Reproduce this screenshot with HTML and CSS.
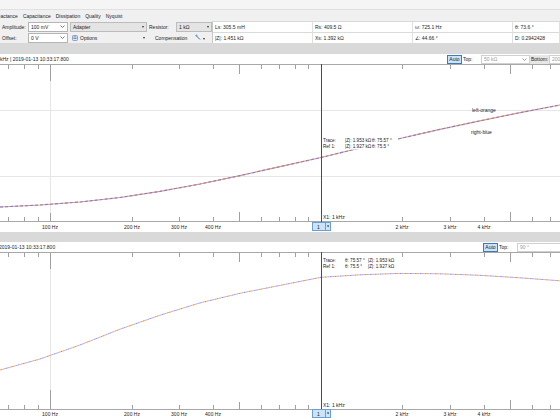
FILE: index.html
```html
<!DOCTYPE html>
<html>
<head>
<meta charset="utf-8">
<link rel="stylesheet" href="styles.css">
</head>
<body>
<div class="app">
  <div class="titlebar"></div>
  <div class="tabs">
    <span class="tab first">Reactance</span>
    <span class="tab">Capacitance</span>
    <span class="tab">Dissipation</span>
    <span class="tab">Quality</span>
    <span class="tab">Nyquist</span>
  </div>
  <div class="toolbar">
    <div class="controls">
      <span class="lbl">Amplitude:</span>
      <div class="select"><span>100 mV</span><svg class="chev" width="5" height="3" viewBox="0 0 5 3"><polyline points="0.5,0.5 2.5,2.5 4.5,0.5"/></svg></div>
      <div class="select combo"><span>Adapter</span><i class="tri"></i></div>
      <span class="lbl pad">Resistor:</span>
      <div class="select combo"><span>1 kΩ</span><i class="tri"></i></div>

      <span class="lbl">Offset:</span>
      <div class="select"><span>0 V</span><svg class="chev" width="5" height="3" viewBox="0 0 5 3"><polyline points="0.5,0.5 2.5,2.5 4.5,0.5"/></svg></div>
      <div class="flatbtn">
        <svg class="icon" width="6" height="6" viewBox="0 0 6 6"><rect x="0.5" y="0.5" width="5" height="5" rx="1" fill="#dfe8f2" stroke="#6f8fb3" stroke-width="0.8"/><path d="M1.5 2h3M1.5 3.5h3" stroke="#3a6ea5" stroke-width="0.7"/></svg>
        <span class="btntext">Options</span>
        <i class="tri"></i>
      </div>
      <div class="comp">
        <span>Compensation</span>
        <svg class="icon wand" width="7" height="7" viewBox="0 0 7 7"><path d="M1 1.5L5 5.5" stroke="#4a6c96" stroke-width="1"/><circle cx="1.5" cy="1.5" r="1" fill="#6aa0dc"/></svg>
        <i class="tri"></i>
      </div>
    </div>
    <div class="readouts">
      <div class="cell">Ls: 305.5 mH</div>
      <div class="cell">Rs: 409.5 Ω</div>
      <div class="cell">ω: 725.1 Hz</div>
      <div class="cell">θ: 73.6 °</div>
      <div class="cell">|Z|: 1.451 kΩ</div>
      <div class="cell">Xs: 1.392 kΩ</div>
      <div class="cell">∠: 44.66 °</div>
      <div class="cell">D: 0.2942428</div>
    </div>
  </div>

  <div class="band"></div>

  <div class="header header-upper">
    <span class="stamp">kHz | 2019-01-13 10:33:17.800</span>
    <div class="range">
      <span class="auto">Auto</span>
      <span class="rlbl">Top:</span>
      <span class="rinput w49">50 kΩ<svg class="chev" width="5" height="3" viewBox="0 0 5 3"><polyline points="0.5,0.5 2.5,2.5 4.5,0.5"/></svg></span>
      <span class="rlbl dark">Bottom:</span>
      <span class="rinput w49">200</span>
    </div>
  </div>

  <svg class="chart" width="560" height="168" viewBox="0 0 560 168">
    <g class="grid">
      <line x1="0" y1="46.5" x2="560" y2="46.5"/>
      <line x1="0" y1="112.5" x2="560" y2="112.5"/>
      <line x1="50.5" y1="0" x2="50.5" y2="158"/>
    </g>
    <line class="axis" x1="0" y1="0.5" x2="560" y2="0.5"/>
    <path class="ticks" d="M8.5 1v4M24.5 1v4M38.5 1v4M50.5 1v16M132.5 1v4M179.5 1v4M213.5 1v4M239.5 1v9M261.5 1v4M279.5 1v4M295.5 1v4M308.5 1v4M402.5 1v4M450.5 1v4M484.5 1v4M510.5 1v9M532.5 1v4M550.5 1v4"/>
    <line class="axis" x1="0" y1="157.5" x2="560" y2="157.5"/>
    <path class="ticks" d="M8.5 157v-4M24.5 157v-4M38.5 157v-4M50.5 157v-8M132.5 157v-4M179.5 157v-4M213.5 157v-4M239.5 157v-9M261.5 157v-4M279.5 157v-4M295.5 157v-4M308.5 157v-4M402.5 157v-4M450.5 157v-4M484.5 157v-4M510.5 157v-9M532.5 157v-4M550.5 157v-4"/>
    <g class="xlabels">
      <text x="50" y="165">100 Hz</text>
      <text x="132" y="165">200 Hz</text>
      <text x="179" y="165">300 Hz</text>
      <text x="213" y="165">400 Hz</text>
      <text x="402" y="165">2 kHz</text>
      <text x="450" y="165">3 kHz</text>
      <text x="484" y="165">4 kHz</text>
    </g>
    <polyline class="trace-orange" points="0,143 40,141 80,138 120,133.5 160,127.4 200,120 240,111.6 280,102.6 321,93.5 360,84 400,74.5 440,65.3 480,56.8 520,48.7 560,41"/>
    <polyline class="trace-blue" points="0,143 40,141 80,138 120,133.5 160,127.4 200,120 240,111.6 280,102.6 321,93.5 360,84 400,74.5 440,65.3 480,56.8 520,48.7 560,41"/>
    <text class="lbltext" x="472" y="48">left-orange</text>
    <text class="lbltext" x="471" y="70">right-blue</text>
    <rect class="cursor" x="321" y="0" width="1" height="158"/>
    <rect class="annbg" x="322" y="72.5" width="76" height="13"/>
    <g class="annot">
      <text x="323" y="78">Trace:</text>
      <text x="345" y="78">|Z|: 1.953 kΩ</text>
      <text x="372" y="78">θ: 75.57 °</text>
      <text x="323" y="84">Ref 1:</text>
      <text x="345" y="84">|Z|: 1.927 kΩ</text>
      <text x="372" y="84">θ: 75.5 °</text>
    </g>
    <rect class="x1bg" x="322" y="149" width="24" height="8"/>
    <text class="annot-t" x="323" y="155">X1: 1 kHz</text>
    <rect class="cbox" x="312.5" y="158.5" width="18" height="8"/>
    <line class="csep" x1="325.5" y1="159" x2="325.5" y2="166"/>
    <text class="annot-t" x="317" y="165">1</text>
    <path class="ctri" d="M326.8 161.6h2.6l-1.3 1.6z"/>
  </svg>

  <div class="band band2"></div>

  <div class="header header-lower">
    <span class="stamp shift">2019-01-13 10:33:17.800</span>
    <div class="range">
      <span class="auto">Auto</span>
      <span class="rlbl">Top:</span>
      <span class="rinput w49">90 °</span>
    </div>
  </div>

  <svg class="chart" width="560" height="168" viewBox="0 0 560 168">
    <g class="grid">
      <line x1="50.5" y1="0" x2="50.5" y2="158"/>
    </g>
    <line class="axis" x1="0" y1="0.5" x2="560" y2="0.5"/>
    <path class="ticks" d="M8.5 1v4M24.5 1v4M38.5 1v4M50.5 1v16M132.5 1v4M179.5 1v4M213.5 1v4M239.5 1v9M261.5 1v4M279.5 1v4M295.5 1v4M308.5 1v4M402.5 1v4M450.5 1v4M484.5 1v4M510.5 1v9M532.5 1v4M550.5 1v4"/>
    <line class="axis" x1="0" y1="157.5" x2="560" y2="157.5"/>
    <path class="ticks" d="M8.5 157v-4M24.5 157v-4M38.5 157v-4M50.5 157v-19M132.5 157v-4M179.5 157v-4M213.5 157v-4M239.5 157v-7M261.5 157v-4M279.5 157v-4M295.5 157v-4M308.5 157v-4M402.5 157v-4M450.5 157v-4M484.5 157v-4M510.5 157v-9M532.5 157v-4M550.5 157v-4"/>
    <g class="xlabels">
      <text x="50" y="164">100 Hz</text>
      <text x="132" y="164">200 Hz</text>
      <text x="179" y="164">300 Hz</text>
      <text x="213" y="164">400 Hz</text>
      <text x="402" y="164">2 kHz</text>
      <text x="450" y="164">3 kHz</text>
      <text x="484" y="164">4 kHz</text>
    </g>
    <polyline class="trace-orange dotted" points="0,118 40,107 80,93 120,77.2 160,63.2 200,50.9 240,41.3 280,33.4 321,25.3 360,22.8 400,21.4 440,21.8 480,23.3 520,25.8 560,28.8"/>
    <polyline class="trace-blue dotted2" points="0,118 40,107 80,93 120,77.2 160,63.2 200,50.9 240,41.3 280,33.4 321,25.3 360,22.8 400,21.4 440,21.8 480,23.3 520,25.8 560,28.8"/>
    <rect class="cursor" x="321" y="0" width="1" height="157"/>
    <rect class="annbg" x="322" y="5" width="78" height="13"/>
    <g class="annot">
      <text x="323" y="10">Trace:</text>
      <text x="345" y="10">θ: 75.57 °</text>
      <text x="368" y="10">|Z|: 1.953 kΩ</text>
      <text x="323" y="16">Ref 1:</text>
      <text x="345" y="16">θ: 75.5 °</text>
      <text x="368" y="16">|Z|: 1.927 kΩ</text>
    </g>
    <rect class="x1bg" x="322" y="149" width="24" height="8"/>
    <text class="annot-t" x="323" y="155">X1: 1 kHz</text>
    <rect class="cbox" x="312.5" y="157.5" width="18" height="8"/>
    <line class="csep" x1="325.5" y1="158" x2="325.5" y2="165"/>
    <text class="annot-t" x="317" y="164">1</text>
    <path class="ctri" d="M326.8 160.6h2.6l-1.3 1.6z"/>
  </svg>
</div>
</body>
</html>
```

FILE: styles.css
```css
* { box-sizing: border-box; }
html, body { margin: 0; padding: 0; }
body {
  width: 560px;
  height: 420px;
  overflow: hidden;
  background: #f0f0f0;
  font-family: "Liberation Sans", Arial, sans-serif;
  font-size: 5px;
  color: #1e1e1e;
}
.app { width: 560px; height: 420px; display: flex; flex-direction: column; overflow: hidden; }

.titlebar { height: 10px; flex: none; background: #f5f5f5; border-bottom: 1px solid #e0e0e0; }

.tabs { height: 11px; flex: none; display: flex; align-items: center; gap: 5px; white-space: nowrap; background: #f0f0f0; }
.tab.first { margin-left: -6px; }

.toolbar { height: 22px; flex: none; display: flex; background: #f0f0f0; }
.controls {
  width: 212px;
  flex: none;
  display: grid;
  grid-template-columns: 28px 42px 77px 29px 36px;
  grid-template-rows: 11px 11px;
  align-items: center;
}
.lbl { padding-left: 2px; white-space: nowrap; }
.lbl.pad { padding-left: 2px; }
.select {
  height: 10px;
  width: 40px;
  border: 1px solid #b4b4b4;
  background: #fff;
  display: flex;
  align-items: center;
  justify-content: space-between;
  padding: 0 2px 0 2px;
  white-space: nowrap;
}
.select.combo { width: 100%; background: #e4e4e4; border-color: #bcbcbc; }
.chev { fill: none; stroke: #555; stroke-width: 0.8; }
.tri {
  display: block;
  width: 0; height: 0;
  border-left: 1.5px solid transparent;
  border-right: 1.5px solid transparent;
  border-top: 2px solid #333;
}
.flatbtn { height: 10px; display: flex; align-items: center; padding: 0 2px; gap: 2px; }
.flatbtn .tri { margin-left: auto; }
.btntext { padding-left: 0; }
.comp { grid-column: span 2; display: flex; align-items: center; padding-left: 8px; gap: 0; white-space: nowrap; }
.comp .wand { margin-left: 8px; }
.comp .tri { margin-left: 0.5px; margin-top: 2px; }

.readouts {
  flex: 1;
  display: grid;
  grid-template-columns: 100px 100px 100px 1fr;
  grid-template-rows: 11px 11px;
  background: #fff;
  border-left: 1px solid #c8c8c8;
  border-top: 1px solid #d8d8d8;
}
.cell {
  padding-left: 2px;
  display: flex;
  align-items: center;
  border-right: 1px solid #e0e0e0;
  border-bottom: 1px solid #dadada;
  white-space: nowrap;
}

.band { height: 11px; flex: none; background: #d9d9d9; }
.band2 { height: 10px; }

.header {
  height: 10px;
  flex: none;
  background: #fff;
  display: grid;
  align-items: center;
  white-space: nowrap;
  overflow: hidden;
}
.header-upper { grid-template-columns: 447px 200px; }
.header-lower { grid-template-columns: 483px 200px; }
.stamp { overflow: hidden; }
.stamp.shift { margin-left: -1px; }
.range { display: flex; align-items: center; height: 10px; }
.auto {
  height: 9px;
  width: 15px;
  background: #cce4f7;
  border: 1px solid #3d7ab8;
  display: flex;
  align-items: center;
  justify-content: center;
}
.rlbl { padding: 0 2px 0 1px; width: 19px; height: 9px; display: flex; align-items: center; }
.rlbl.dark { background: #e6e6e6; width: 19px; }
.rinput {
  height: 9px;
  border: 1px solid #d0d0d0;
  background: #fff;
  color: #9a9a9a;
  display: flex;
  align-items: center;
  justify-content: space-between;
  padding: 0 2px;
}
.rinput .chev { stroke: #888; }
.w49 { width: 49px; }

.chart { display: block; flex: none; background: #fff; }
.chart text { font-family: "Liberation Sans", Arial, sans-serif; font-size: 5px; fill: #222; }
.chart .annot text { font-size: 4.6px; }
.annbg { fill: #fff; }
.grid line { stroke: #e6e6e6; stroke-width: 1; }
.axis { stroke: #a8a8a8; stroke-width: 1; }
.ticks { stroke: #a0a0a0; stroke-width: 1; fill: none; }
.xlabels text { text-anchor: middle; }
.trace-orange { fill: none; stroke: #f0a050; stroke-width: 1.2; }
.trace-blue { fill: none; stroke: #7d7df5; stroke-width: 1.1; stroke-dasharray: 3 2; }
.trace-orange.dotted { stroke-width: 1; stroke-dasharray: 1 1.5; }
.trace-blue.dotted2 { stroke-width: 1; stroke-dasharray: 1 1.5; stroke-dashoffset: 1.2; }
.cursor { fill: #ff0000; }
.x1bg { fill: #fff; }
.cbox { fill: #cce4f7; stroke: #6a9fd6; stroke-width: 1; }
.csep { stroke: #6a9fd6; stroke-width: 1; }
.ctri { fill: #333; }
```
